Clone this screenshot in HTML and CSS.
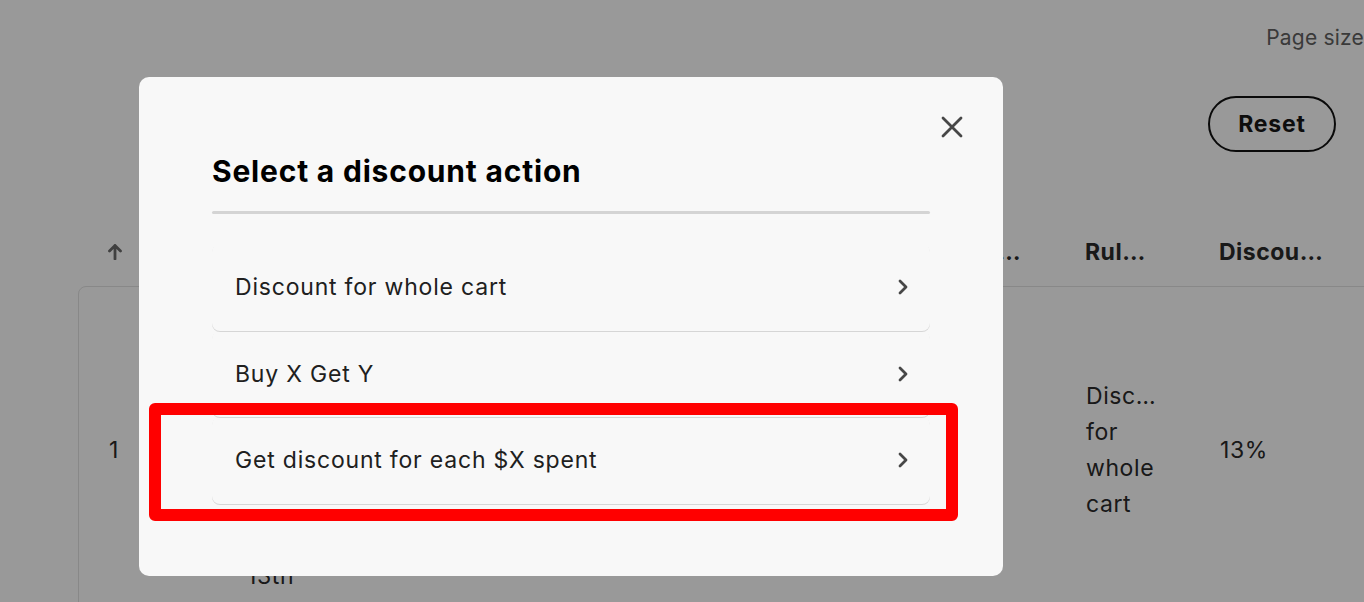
FILE: index.html
```html
<!DOCTYPE html>
<html lang="en">
<head>
<meta charset="utf-8">
<title>Select a discount action</title>
<link rel="stylesheet" href="styles.css">
</head>
<body>
<div class="page">
  <div class="pagesize-row">
    <span class="pagesize-label">Page size</span>
    <span class="pagesize-select">25</span>
  </div>
  <div class="actions-row">
    <button class="reset-btn" type="button">Reset</button>
  </div>
  <div class="table">
    <div class="thead">
      <div class="th th-sort">
        <svg class="sort-icon" width="14" height="17" viewBox="0 0 14 17" aria-hidden="true">
          <path d="M7 16V2.5M1.5 8L7 2.5 12.5 8" fill="none" stroke="currentColor" stroke-width="2.8" stroke-linecap="round" stroke-linejoin="round"/>
        </svg>
      </div>
      <div class="th">Name</div>
      <div class="th th-right">Status…</div>
      <div class="th">Rul…</div>
      <div class="th">Discou…</div>
    </div>
    <div class="tcard">
      <div class="trow">
        <div class="td">1</div>
        <div class="td td-words">Discount
applied
to
cart
valid
until
November
13th</div>
        <div class="td">Active</div>
        <div class="td td-narrow">Disc… for whole cart</div>
        <div class="td">13%</div>
      </div>
    </div>
  </div>
</div>

<div class="overlay">
  <div class="modal" role="dialog" aria-labelledby="modal-title">
    <button class="close-btn" type="button" aria-label="Close">
      <svg width="22" height="22" viewBox="0 0 22 22" aria-hidden="true">
        <path d="M2 2L20 20M20 2L2 20" fill="none" stroke="currentColor" stroke-width="2.8" stroke-linecap="round"/>
      </svg>
    </button>
    <h2 class="modal-title" id="modal-title">Select a discount action</h2>
    <div class="divider"></div>
    <ul class="action-list">
      <li class="action-item">
        <span>Discount for whole cart</span>
        <svg class="chev" width="10" height="16" viewBox="0 0 10 16" aria-hidden="true"><path d="M2 2L8 8 2 14" fill="none" stroke="currentColor" stroke-width="2.8" stroke-linecap="round" stroke-linejoin="round"/></svg>
      </li>
      <li class="action-item">
        <span>Buy X Get Y</span>
        <svg class="chev" width="10" height="16" viewBox="0 0 10 16" aria-hidden="true"><path d="M2 2L8 8 2 14" fill="none" stroke="currentColor" stroke-width="2.8" stroke-linecap="round" stroke-linejoin="round"/></svg>
      </li>
      <li class="action-item">
        <span>Get discount for each $X spent</span>
        <svg class="chev" width="10" height="16" viewBox="0 0 10 16" aria-hidden="true"><path d="M2 2L8 8 2 14" fill="none" stroke="currentColor" stroke-width="2.8" stroke-linecap="round" stroke-linejoin="round"/></svg>
      </li>
    </ul>
  </div>
  <div class="highlight"></div>
</div>
</body>
</html>
```

FILE: styles.css
```css
* { box-sizing: border-box; }

html, body {
  margin: 0;
  height: 100%;
  overflow: hidden;
}

body {
  font-family: Inter, "Noto Sans", "Liberation Sans", sans-serif;
  background: #ffffff;
  color: #303030;
}

.page {
  width: 1364px;
  height: 602px;
  overflow: hidden;
}

.pagesize-row {
  display: flex;
  justify-content: flex-end;
  align-items: center;
  gap: 18px;
  height: 75px;
  margin-right: -78px;
}

.pagesize-label {
  font-size: 21px;
  letter-spacing: 0.2px;
  color: #616161;
  white-space: nowrap;
}

.pagesize-select {
  font-size: 21px;
  width: 60px;
  color: #303030;
}

.actions-row {
  display: flex;
  justify-content: flex-end;
  margin-top: 21px;
  padding-right: 28px;
}

.reset-btn {
  width: 128px;
  height: 56px;
  border: 2.6px solid #111111;
  border-radius: 28px;
  background: transparent;
  font-family: inherit;
  font-size: 23px;
  font-weight: 700;
  letter-spacing: 0.8px;
  color: #161616;
}

.table {
  margin-top: 65px;
  margin-left: 78px;
}

.thead,
.trow {
  display: grid;
  grid-template-columns: 138px 640px 199px 134px 260px;
}

.thead {
  height: 69px;
  align-items: center;
}

.th {
  padding: 0 30px;
  font-size: 23px;
  font-weight: 700;
  letter-spacing: 0.5px;
  color: #2a2a2a;
  white-space: nowrap;
}

.th-sort {
  display: flex;
  color: #6b6b6b;
}

.th-right {
  text-align: right;
  padding-right: 34px;
}

.tcard {
  border: 1px solid #e3e3e3;
  border-radius: 8px;
  width: 1400px;
  background: #ffffff;
}

.trow {
  height: 326px;
  align-items: center;
}

.td {
  padding: 0 30px;
  font-size: 23px;
  letter-spacing: 0.6px;
  line-height: 36px;
  color: #2a2a2a;
}

.td-words {
  white-space: pre-line;
}

.td-narrow {
  width: 134px;
}

/* Modal */
.overlay {
  position: fixed;
  inset: 0;
  background: rgba(0, 0, 0, 0.4);
}

.modal {
  position: absolute;
  left: 139px;
  top: 77px;
  width: 864px;
  height: 499px;
  padding: 76px 73px 0;
  background: #f8f8f8;
  border-radius: 10px;
}

.close-btn {
  position: absolute;
  top: 39px;
  right: 40px;
  width: 22px;
  height: 22px;
  padding: 0;
  border: 0;
  background: none;
  color: #474747;
  display: flex;
}

.modal-title {
  margin: 0;
  font-size: 30px;
  line-height: 36px;
  font-weight: 700;
  color: #000000;
  letter-spacing: 0.8px;
}

.divider {
  height: 3px;
  margin-top: 22px;
  background: #d4d4d4;
  border-radius: 2px;
}

.action-list {
  list-style: none;
  margin: 30px 0 0;
  padding: 0;
}

.action-item {
  display: flex;
  align-items: center;
  justify-content: space-between;
  height: 86.5px;
  padding: 0 22px 0 23px;
  border-radius: 8px;
  box-shadow: 0 1px 0 0 #d6d6d6;
  font-size: 23px;
  letter-spacing: 0.8px;
  color: #202020;
}

.chev {
  color: #474747;
}

.highlight {
  position: absolute;
  left: 149px;
  top: 403px;
  width: 809px;
  height: 118px;
  border: 12.5px solid #ff0000;
  border-radius: 6px;
}
```
